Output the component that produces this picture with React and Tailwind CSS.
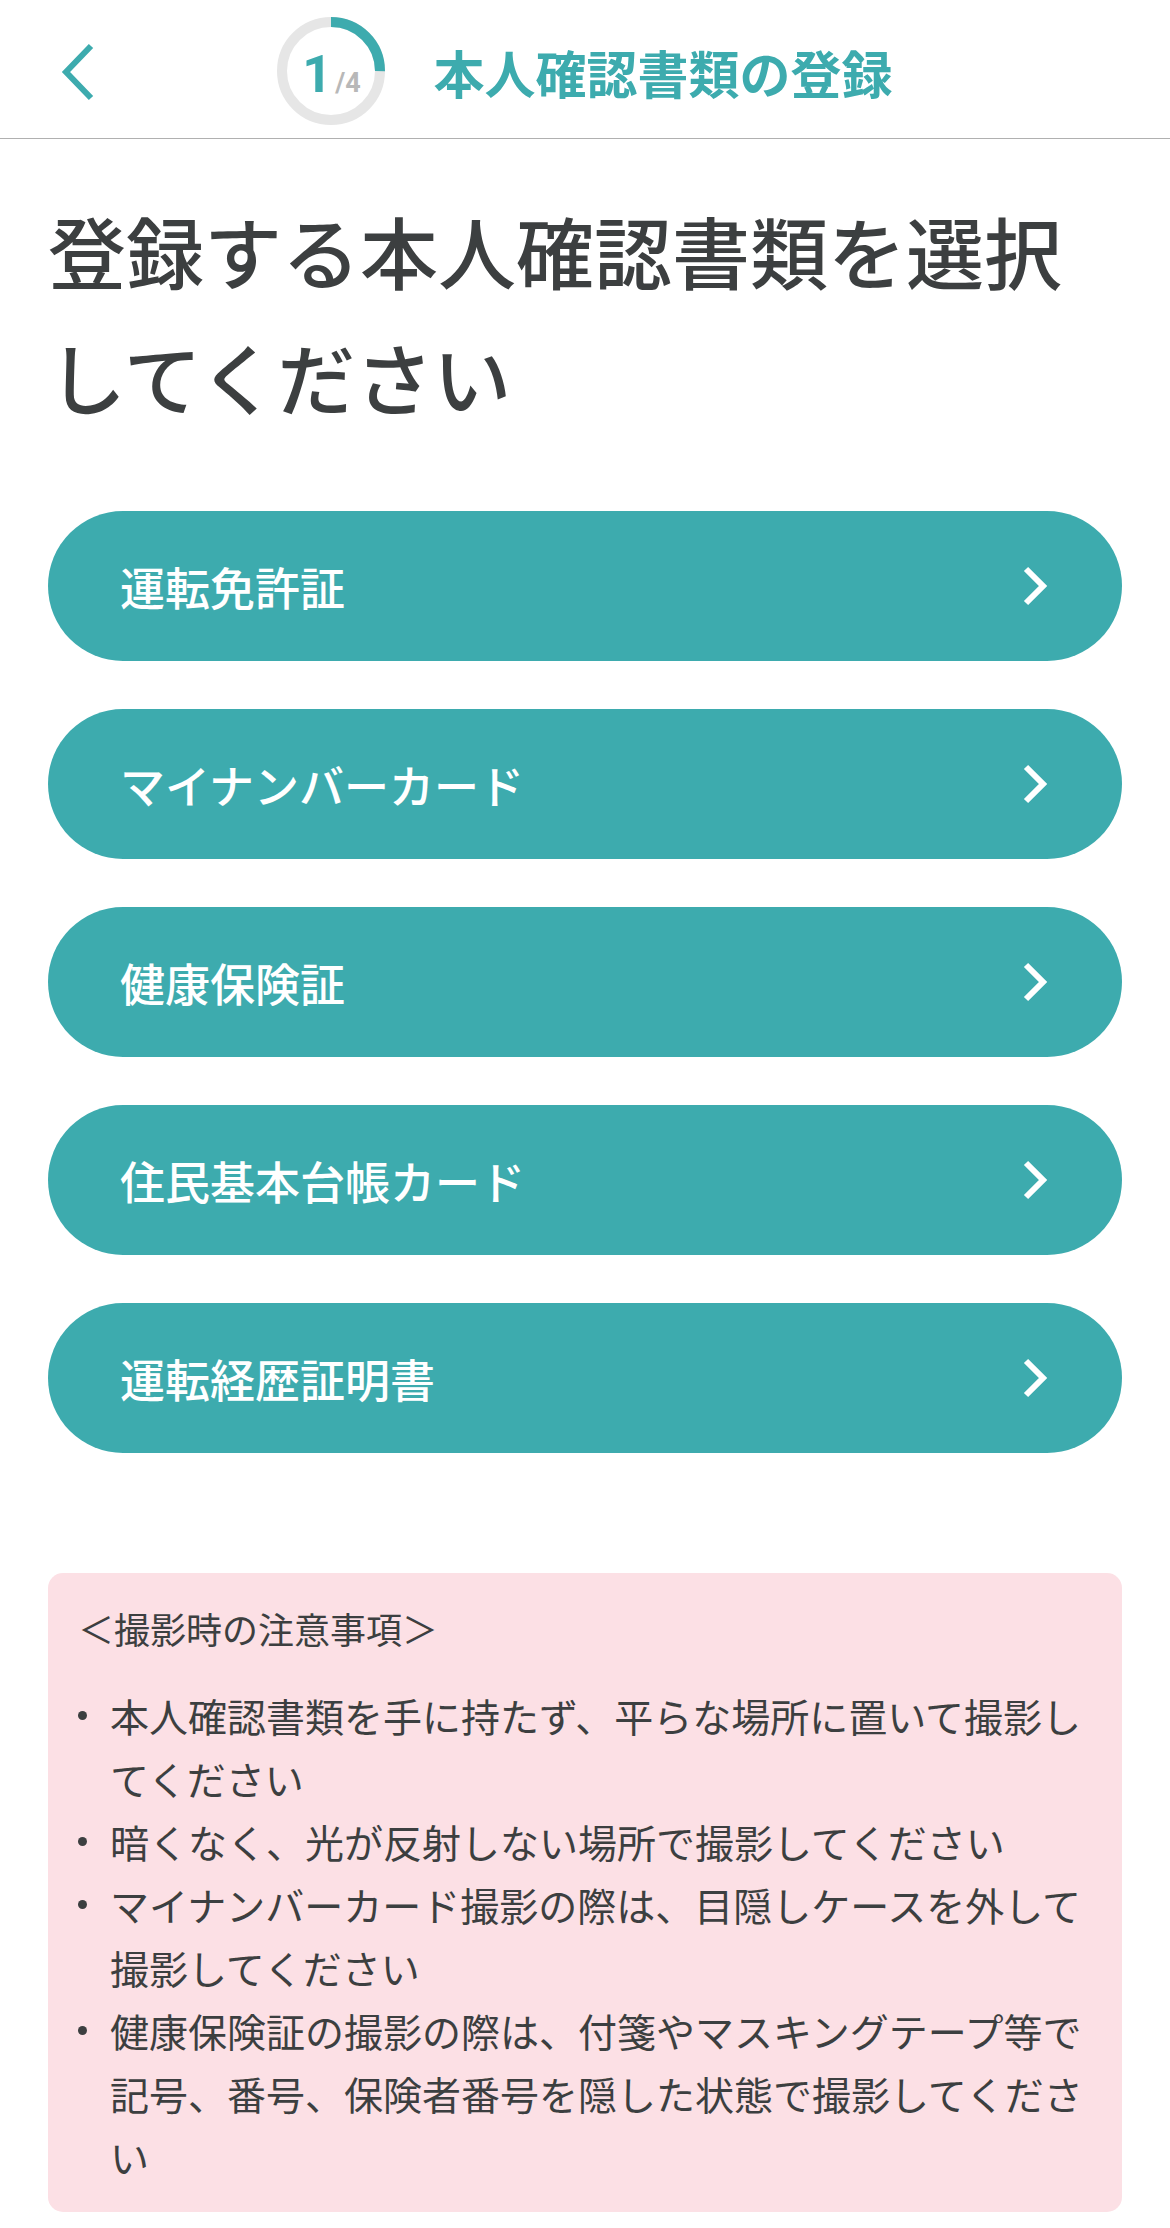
import React from "react";

const TEAL = "#3dabae";

function BackChevron() {
  return (
    <svg width="36" height="58" viewBox="0 0 36 58" fill="none">
      <path d="M32 3 L7 29 L32 55" stroke={TEAL} strokeWidth="6" strokeLinejoin="miter" />
    </svg>
  );
}

function ProgressRing() {
  const r = 49;
  const c = 2 * Math.PI * r;
  return (
    <div className="relative w-[108px] h-[108px] shrink-0">
      <svg width="108" height="108" viewBox="0 0 108 108">
        <circle cx="54" cy="54" r={r} fill="none" stroke="#e6e6e6" strokeWidth="10" />
        <circle
          cx="54"
          cy="54"
          r={r}
          fill="none"
          stroke={TEAL}
          strokeWidth="10"
          strokeDasharray={`${c / 4} ${c}`}
          transform="rotate(-90 54 54)"
        />
      </svg>
      <div className="absolute inset-0 flex items-center justify-center pt-[8px]">
        <span className="flex items-baseline" style={{ fontFamily: "Roboto, 'Liberation Sans', sans-serif" }}>
          <span className="text-[52px] leading-none font-bold text-[#3dabae]">1</span>
          <span className="text-[27px] leading-none font-bold text-[#b8b8b8] ml-[3px]">/4</span>
        </span>
      </div>
    </div>
  );
}

function Chevron() {
  return (
    <svg width="26" height="40" viewBox="0 0 26 40" fill="none">
      <path d="M3 3 L20 20 L3 37" stroke="#ffffff" strokeWidth="6" strokeLinejoin="miter" />
    </svg>
  );
}

const docs = ["運転免許証", "マイナンバーカード", "健康保険証", "住民基本台帳カード", "運転経歴証明書"];

const notes = [
  "本人確認書類を手に持たず、平らな場所に置いて撮影してください",
  "暗くなく、光が反射しない場所で撮影してください",
  "マイナンバーカード撮影の際は、目隠しケースを外して撮影してください",
  "健康保険証の撮影の際は、付箋やマスキングテープ等で記号、番号、保険者番号を隠した状態で撮影してください",
];

export default function App() {
  return (
    <div
      className="w-full min-h-[2228px] bg-white text-[#3c3f40]"
      style={{ fontFamily: "'Noto Sans CJK JP', 'Noto Sans', sans-serif" }}
    >
      <header className="grid grid-cols-[1fr_auto_1fr] items-center h-[139px] border-b border-[#b0b0b0] pt-[4px]">
        <div className="pl-[59px] flex items-center pt-[2px]">
          <BackChevron />
        </div>
        <div className="flex items-center gap-[48px]">
          <ProgressRing />
          <h1 className="text-[51px] leading-none font-bold text-[#3dabae] pt-[2px]">本人確認書類の登録</h1>
        </div>
        <div />
      </header>

      <main className="px-[48px]">
        <h2 className="pt-[48px] text-[78px] leading-[126px] font-medium text-[#3c3f40]">
          登録する本人確認書類を選択してください
        </h2>

        <div className="mt-[72px] flex flex-col gap-[48px]">
          {docs.map((d) => (
            <button
              key={d}
              className="h-[150px] w-full rounded-full bg-[#3dabae] flex items-center justify-between pl-[72px] pr-[73px]"
            >
              <span className="text-[45px] leading-none font-medium text-white">{d}</span>
              <Chevron />
            </button>
          ))}
        </div>

        <section className="mt-[120px] rounded-[15px] bg-[#fce0e5] px-[30px] py-[24px]">
          <p className="text-[36px] leading-[63px] font-normal text-[#3c3f40]">＜撮影時の注意事項＞</p>
          <ul className="mt-[24px]">
            {notes.map((n) => (
              <li key={n} className="flex text-[39px] leading-[63px] text-[#3c3f40]">
                <span className="w-[32px] shrink-0 h-[63px] flex items-center">
                  <span className="w-[9px] h-[9px] rounded-full bg-[#3c3f40]" />
                </span>
                <span>{n}</span>
              </li>
            ))}
          </ul>
        </section>
      </main>
    </div>
  );
}
